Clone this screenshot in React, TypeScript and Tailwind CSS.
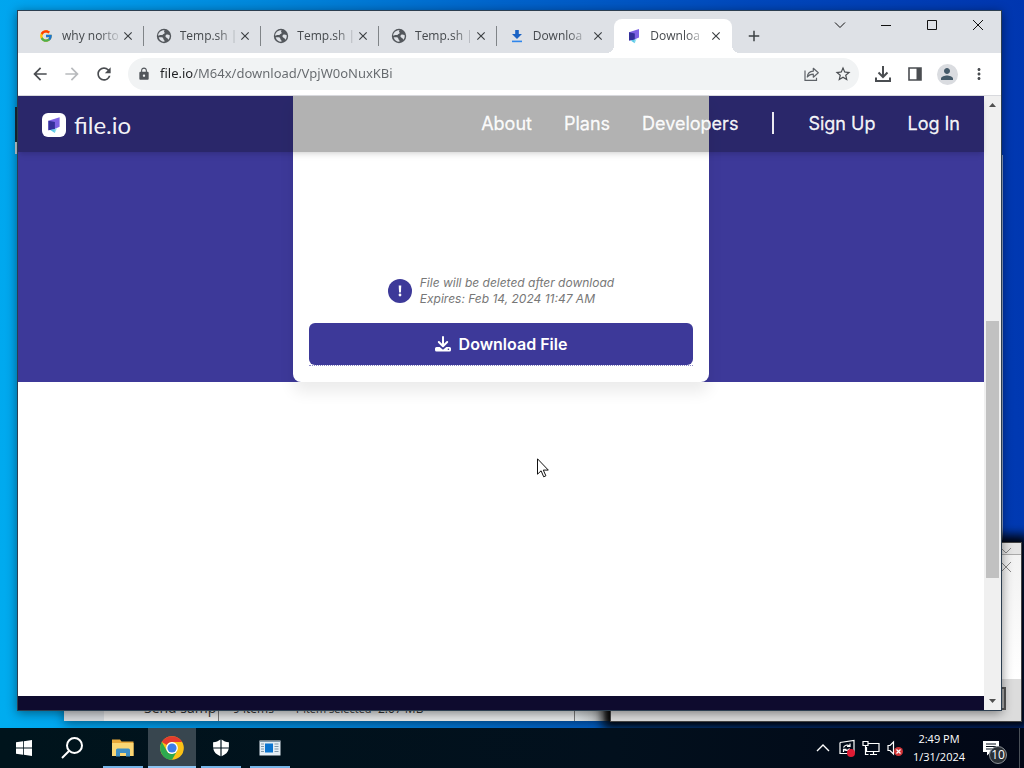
import type { ReactNode } from "react";
import { FcGoogle } from "react-icons/fc";
import {
  MdAdd,
  MdArrowBack,
  MdArrowForward,
  MdClose,
  MdLock,
  MdMoreVert,
  MdPerson,
  MdPublic,
  MdRefresh,
  MdStarBorder,
} from "react-icons/md";

function FileIoMark({ className }: { className: string }) {
  return (
    <svg viewBox="0 0 16 16" className={className} aria-hidden="true">
      <path d="M3 4.200 13 1v8.600L8.600 11.600 3 12.600z" fill="#7d62e4" />
      <path d="M3 4.200 8.800 5.400v6.400L3 12.600z" fill="#34309a" />
      <path d="M4.600 12.400 8.800 11.600v3.600z" fill="#5cc8e8" />
      <path d="M8.800 11.600 10.600 10.800 8.800 15.200z" fill="#8fe3ee" />
    </svg>
  );
}

function GlobeMark() {
  return (
    <svg viewBox="0 0 16 16" className="size-4" aria-hidden="true">
      <circle cx="8" cy="8" r="7.200" fill="#53575c" />
      <path
        d="M9 2.300c-1 .3-1.200 1.300-.6 1.900.8.700 0 1.500-.9 1.700-.8.200-.6 1-1.300 1.200H4.500c-.9 0-1.300.9-2.400.5C2.300 4.500 5 1.900 9 2.300zM2.700 9.200h3.100c1 0 1.500.8 1.500 1.600 0 1 1 .8 1.100 1.700l.1 1.300c-2.900.1-5.100-1.700-5.800-4.600zM10 6.900c1-.6 2.600-.3 3.700.4.200 1.700-.3 3.200-1.300 4.400-.6-.3-.5-1.200-1.300-1.600-1.400-.6-2.400-2.300-1.100-3.200z"
        fill="#dee1e6"
      />
    </svg>
  );
}

function SaveMark() {
  return (
    <svg viewBox="0 0 16 16" className="size-4" aria-hidden="true">
      <path d="M6.200 2h3.600v4h3.200L8 11 3 6h3.200z" fill="#1a62c4" />
      <path d="M3 12.600h10v1.600H3z" fill="#2f86ec" />
    </svg>
  );
}

function Tab({ icon, title, active, divided }: { icon: ReactNode; title: string; active?: boolean; divided?: boolean }) {
  return (
    <div
      className={
        active
          ? "relative flex h-[34px] min-w-0 flex-1 items-center rounded-t-lg bg-white pr-2 pl-3"
          : divided
            ? "relative flex h-[34px] min-w-0 flex-1 items-center pr-2 pl-3 after:absolute after:top-[7px] after:right-0 after:h-5 after:w-px after:bg-[#808488]"
            : "relative flex h-[34px] min-w-0 flex-1 items-center pr-2 pl-3"
      }
    >
      <button className="flex min-w-0 flex-1 items-center gap-2 text-left">
        <span className="flex w-4 shrink-0 justify-center">{icon}</span>
        <span className="flex-1 whitespace-nowrap [mask-image:linear-gradient(90deg,#000_65%,rgba(0,0,0,0.15))]">
          {title}
        </span>
      </button>
      <button aria-label={`Close ${title}`} className="ml-1 flex size-4 shrink-0 items-center justify-center text-[#3c4043]">
        <MdClose className="size-[14px]" />
      </button>
      {active && (
        <>
          <span className="absolute bottom-0 -left-2 size-2 bg-[radial-gradient(circle_at_0_0,transparent_8px,#fff_8px)]" />
          <span className="absolute -right-2 bottom-0 size-2 bg-[radial-gradient(circle_at_100%_0,transparent_8px,#fff_8px)]" />
        </>
      )}
    </div>
  );
}

function ToolButton({ label, children }: { label: string; children: ReactNode }) {
  return (
    <button aria-label={label} className="flex size-8 shrink-0 items-center justify-center text-[#4a4d51]">
      {children}
    </button>
  );
}

function CaptionButton({ label, path }: { label: string; path: string }) {
  return (
    <button aria-label={label} className="flex h-7 w-[46px] items-center justify-center">
      <svg viewBox="0 0 12 12" className="size-3" fill="none" stroke="#111" strokeWidth="1">
        <path d={path} />
      </svg>
    </button>
  );
}

function TabStrip() {
  return (
    <div className="flex h-[42px] shrink-0 bg-[#dee1e6] pl-2 text-[12px] text-[#45494d]">
      <div className="flex w-[706px] items-end">
        <Tab icon={<FcGoogle className="size-[14px]" />} title="why norto" divided />
        <Tab icon={<GlobeMark />} title="Temp.sh |" divided />
        <Tab icon={<GlobeMark />} title="Temp.sh |" divided />
        <Tab icon={<GlobeMark />} title="Temp.sh |" divided />
        <Tab icon={<SaveMark />} title="Downloa" />
        <Tab icon={<FileIoMark className="size-4" />} title="Downloa" active />
      </div>
      <button aria-label="New tab" className="mt-[11px] ml-2 flex size-7 items-center justify-center text-[#3c4043]">
        <MdAdd className="size-[18px]" />
      </button>
      <div className="ml-auto flex">
        <CaptionButton label="Search tabs" path="M1 3.500 6 8.500 11 3.500" />
        <CaptionButton label="Minimize" path="M1 6.500h10" />
        <CaptionButton label="Maximize" path="M1.500 1.500h9v9h-9z" />
        <CaptionButton label="Close" path="M1 1 11 11M11 1 1 11" />
      </div>
    </div>
  );
}

function Toolbar() {
  return (
    <div className="flex h-[43px] shrink-0 items-center border-b border-[#d9dade] bg-white px-[6px]">
      <ToolButton label="Back">
        <MdArrowBack className="size-5" />
      </ToolButton>
      <button aria-label="Forward" className="flex size-8 items-center justify-center text-[#b8babd]">
        <MdArrowForward className="size-5" />
      </button>
      <ToolButton label="Reload">
        <MdRefresh className="size-5" />
      </ToolButton>
      <div className="ml-2 flex h-8 min-w-0 flex-1 items-center rounded-full bg-[#f1f3f4] pl-[9px]">
        <MdLock className="size-[14px] shrink-0 text-[#53575c]" />
        <input
          aria-label="Address"
          defaultValue="file.io/M64x/download/VpjW0oNuxKBi"
          className="ml-[9px] min-w-0 flex-1 bg-[linear-gradient(90deg,#202124_33px,#64686c_33px)] bg-clip-text font-['Noto_Sans',sans-serif] text-[13px] text-transparent outline-none"
        />
        <ToolButton label="Share">
          <svg viewBox="0 0 18 18" className="size-[18px]" fill="none" stroke="#5f6368" strokeWidth="1.200">
            <path d="M3 5.500v9.800h11.500v-2.600" />
            <path d="M5.300 12C5.600 8.400 7.800 6.300 11.300 6.200V3.300L16.300 7.800 11.300 12.200V9.200C8.600 9.200 6.700 10.100 5.300 12z" strokeLinejoin="round" />
          </svg>
        </ToolButton>
        <ToolButton label="Bookmark">
          <MdStarBorder className="size-[18px]" />
        </ToolButton>
      </div>
      <div className="ml-2 flex">
        <ToolButton label="Downloads">
          <svg viewBox="0 0 18 18" className="size-[18px]" fill="none" stroke="#4a4d51" strokeWidth="2">
            <path d="M9 1v10.500M4.500 7.500 9 12l4.500-4.500M2 12.500V16h14v-3.500" />
          </svg>
        </ToolButton>
        <ToolButton label="Side panel">
          <svg viewBox="0 0 14 14" className="size-[14px]" fill="none">
            <path d="M1 1h12v12H1z" stroke="#4a4d51" strokeWidth="1.600" />
            <path d="M8.500 1H13v12H8.500z" fill="#4a4d51" />
          </svg>
        </ToolButton>
        <ToolButton label="Profile">
          <span className="flex size-[21px] items-center justify-center rounded-full bg-[#dadce0]">
            <MdPerson className="size-[18px] text-[#455a69]" />
          </span>
        </ToolButton>
        <ToolButton label="Menu">
          <MdMoreVert className="size-[18px]" />
        </ToolButton>
      </div>
    </div>
  );
}

function SiteNav() {
  return (
    <nav className="absolute inset-x-0 top-0 flex h-14 items-center bg-black/30 px-6 pb-[2px] font-['Inter',sans-serif] text-[18px] font-normal text-white/95 shadow-md">
      <a href="#home" className="mt-1 flex items-center gap-2">
        <span className="flex size-6 items-center justify-center rounded-md bg-white">
          <FileIoMark className="size-[18px]" />
        </span>
        <span className="font-['Lato',sans-serif] text-[24px] leading-6">file.io</span>
      </a>
      <div className="ml-auto flex items-center gap-8 [-webkit-text-stroke:0.3px_currentColor]">
        <a href="#about">About</a>
        <a href="#plans">Plans</a>
        <a href="#developers">Developers</a>
        <span className="mx-[2px] h-[22px] w-[2px] bg-white/90" />
        <a href="#signup">Sign Up</a>
        <a href="#login">Log In</a>
      </div>
    </nav>
  );
}

function DownloadCard() {
  return (
    <div className="flex w-[416px] flex-col justify-end rounded-b-lg bg-white p-4 font-['Inter',sans-serif] shadow-[0_10px_15px_rgba(0,0,0,0.08)]">
      <div className="mb-4 flex items-center justify-center gap-2">
        <span className="flex size-6 items-center justify-center rounded-full bg-[#3d3999]">
          <svg viewBox="0 0 12 12" className="size-3" fill="#fff" aria-hidden="true">
            <path d="M4.700.6h2.600L6.900 7.500H5.100z" />
            <circle cx="6" cy="10" r="1.400" />
          </svg>
        </span>
        <p className="text-[12px] leading-4 text-[#777] italic">
          File will be deleted after download
          <br />
          Expires: Feb 14, 2024 11:47 AM
        </p>
      </div>
      <div className="border-b border-dotted border-[#8f8cc8]">
        <button className="flex h-[42px] w-full items-center justify-center gap-2 rounded-md bg-[#3d3999] text-[16px] font-semibold text-white">
          <svg viewBox="0 0 16 16" className="size-4" aria-hidden="true">
            <path d="M8 1v8.500M3.800 6 8 10.200 12.200 6" fill="none" stroke="#fff" strokeWidth="2" strokeLinecap="round" strokeLinejoin="round" />
            <path d="M1.500 11h3.200L8 13.700 11.300 11h3.200a1.500 1.500 0 0 1 1.500 1.500V14a1.500 1.500 0 0 1-1.500 1.500h-13A1.500 1.500 0 0 1 0 14v-1.500A1.500 1.500 0 0 1 1.500 11z" fill="#fff" />
            <circle cx="13.400" cy="13.300" r=".8" fill="#3d3999" />
          </svg>
          Download File
        </button>
      </div>
    </div>
  );
}

function Browser() {
  return (
    <section className="absolute top-[10px] right-[22px] bottom-[57px] left-[17px] flex flex-col border border-[#2c3e50] bg-white shadow-[0_2px_10px_rgba(0,0,0,0.45)]">
      <TabStrip />
      <Toolbar />
      <div className="flex min-h-0 flex-1">
        <main className="relative flex min-w-0 flex-1 flex-col bg-white">
          <div className="flex h-[286px] shrink-0 justify-center bg-[#3d3999]">
            <DownloadCard />
          </div>
          <div className="flex-1" />
          <footer className="h-[14px] bg-[#0e0b2e]" />
          <SiteNav />
        </main>
        <div className="flex w-[17px] flex-col items-center bg-[#f0f0f0]">
          <svg viewBox="0 0 17 17" className="size-[17px] shrink-0" fill="#505050">
            <path d="M5 11h7L8.500 7z" />
          </svg>
          <div className="flex w-full flex-1 flex-col items-center">
            <div className="flex-[208]" />
            <div className="w-[13px] flex-[257] bg-[#c1c1c1]" />
            <div className="flex-[115]" />
          </div>
          <svg viewBox="0 0 17 17" className="size-[17px] shrink-0" fill="#505050">
            <path d="M5 6h7L8.500 10z" />
          </svg>
        </div>
      </div>
    </section>
  );
}

function BackgroundWindows() {
  return (
    <>
      <div className="absolute top-[107px] left-[15px] flex w-[3px] flex-col">
        <div className="h-[35px] bg-[#1c2b3a]" />
        <div className="h-3 bg-[#cfd8e0]" />
      </div>
      <div className="absolute top-[155px] right-[21px] h-[385px] w-[2px] bg-[#8fa3c8]" />
      <section className="absolute bottom-[47px] left-[64px] flex h-[200px] w-[546px] items-end bg-[#d9dadb] shadow-[0_3px_10px_rgba(0,0,0,0.4)]">
        <div className="flex h-6 w-[155px] items-center border-r border-[#777] bg-[linear-gradient(90deg,#d4d8dc_40px,#e9e9e9_40px)] pb-[2px] pl-20 text-[14px] leading-4 text-[#333]">
          Send samp
        </div>
        <div className="flex h-6 flex-1 items-center border-r border-[#777] bg-[#e4e6e7] pl-[14px] text-[12px] leading-4 text-[#333]">
          <span className="w-[61px]">9 items</span>
          <span className="w-[84px] text-[11px] whitespace-nowrap">1 item selected</span>
          <span>2.07 MB</span>
        </div>
        <div className="h-6 w-[35px] bg-[linear-gradient(90deg,#dfe4e6,#b7babb_80%,#444)]" />
      </section>
      <section className="absolute right-[2px] bottom-[46px] flex h-[180px] w-[412px] flex-col border border-[#444] bg-white shadow-[0_0_10px_7px_rgba(0,0,0,0.95)]">
        <div className="flex h-3 justify-end border-b border-[#aaa] bg-[#e4e4e4] pr-[9px]">
          <svg viewBox="0 0 12 12" className="size-3" fill="none" stroke="#888">
            <path d="M1 5 6 10 11 5" />
          </svg>
        </div>
        <div className="flex flex-1 justify-end bg-[linear-gradient(#f2f2f2,#fff)] pt-[6px] pr-[9px]">
          <svg viewBox="0 0 12 12" className="size-3" fill="none" stroke="#888">
            <path d="M1 1 11 11M11 1 1 11" />
          </svg>
        </div>
        <div className="flex h-[42px] justify-end bg-[#dcdcdc] pt-2 pr-[15px]">
          <div className="h-[23px] w-8 border-2 border-[#555] bg-[#aaa]" />
        </div>
      </section>
    </>
  );
}

function TaskButton({ label, active, running, children }: { label: string; active?: boolean; running?: boolean; children: ReactNode }) {
  return (
    <button
      aria-label={label}
      className={
        active
          ? "relative flex h-10 w-12 items-center justify-center bg-[#38464f]"
          : "relative flex h-10 w-12 items-center justify-center"
      }
    >
      {children}
      {running && (
        <span className={active ? "absolute inset-x-0 bottom-0 h-[2px] bg-[#8cc4f2]" : "absolute inset-x-1 bottom-0 h-[2px] bg-[#76b5e8]"} />
      )}
    </button>
  );
}

function Taskbar() {
  return (
    <footer className="absolute inset-x-0 bottom-0 flex h-10 items-center bg-[linear-gradient(90deg,#00141c,#02101d_60%,#020716)] text-white">
      <TaskButton label="Start">
        <svg viewBox="0 0 16 16" className="size-4" fill="#fff">
          <path d="M0 2.300 7 1.300v6.300H0zM7.800 1.200 16 0v7.600H7.800zM0 8.400h7v6.300l-7-1zM7.800 8.400H16V16l-8.200-1.200z" />
        </svg>
      </TaskButton>
      <TaskButton label="Search">
        <svg viewBox="0 0 22 22" className="size-[22px]" fill="none" stroke="#fff" strokeWidth="2">
          <circle cx="13.500" cy="8.500" r="7.500" />
          <path d="M8 14 1 21" />
        </svg>
      </TaskButton>
      <div className="ml-[3px] flex gap-px">
        <TaskButton label="File Explorer" running>
          <svg viewBox="0 0 22 20" className="h-5 w-[22px]">
            <path d="M0 1.500h8l1.500 2H21.500V18H0z" fill="#e8a93a" />
            <path d="M0 5h21.500v13H0z" fill="#fbd774" />
            <path d="M4 18v-6a1.500 1.500 0 0 1 1.500-1.500h11A1.500 1.500 0 0 1 18 12v6.500h-4V15H8v3.500H4z" fill="#3f8fc4" />
          </svg>
        </TaskButton>
        <TaskButton label="Chrome" running active>
          <svg viewBox="0 0 24 24" className="size-6">
            <circle cx="12" cy="12" r="11.800" fill="#fbc116" />
            <path d="M1.780 6.100A11.800 11.800 0 0 1 22.220 6.100H12A5.900 5.900 0 0 0 6.890 9.050z" fill="#e33b2e" />
            <path d="M1.780 6.100 6.890 14.950A5.900 5.900 0 0 0 12 17.900l5.110-2.950L12 23.800A11.800 11.800 0 0 1 1.780 6.100z" fill="#2da94f" />
            <circle cx="12" cy="12" r="5.900" fill="#fff" />
            <circle cx="12" cy="12" r="4.600" fill="#3b7de9" />
          </svg>
        </TaskButton>
        <TaskButton label="Security" running>
          <svg viewBox="0 0 18 18" className="size-[18px]" fill="#fff">
            <path d="M8.400.6V8.400H1.100V3.300C4 3.200 6.400 2.300 8.400.6zM9.600.6c2 1.700 4.400 2.600 7.300 2.700v5.100H9.600zM1.200 9.600h7.200v7.600C4.600 15.700 1.800 13.300 1.200 9.600zM9.600 9.600h7.200c-.6 3.700-3.400 6.100-7.200 7.600z" />
          </svg>
        </TaskButton>
        <TaskButton label="Viewer" running>
          <svg viewBox="0 0 22 16" className="h-4 w-[22px]">
            <path d="M.5.500h21v15H.5z" fill="#e4edf4" />
            <path d="M6 3.500h8v9H6z" fill="#0b74cf" />
            <path d="M2 4h3M2 6.500h3M2 9h3M2 11.500h3M15.500 4h4M15.500 6.500h4M15.500 9h4M15.500 11.500h4M1 1.500h20" stroke="#7f98ab" />
          </svg>
        </TaskButton>
      </div>
      <div className="ml-auto flex h-10 items-center pr-1">
        <button aria-label="Hidden icons" className="flex w-6 justify-center">
          <svg viewBox="0 0 14 8" className="h-2 w-[14px]" fill="none" stroke="#fff" strokeWidth="1.400">
            <path d="M1 7 7 1l6 6" />
          </svg>
        </button>
        <button aria-label="Sync status" className="flex w-6 justify-center">
          <svg viewBox="0 0 18 18" className="size-[18px]" fill="none" stroke="#fff" strokeWidth="1.200">
            <path d="M2 3.500 16 1.500v12.500M2 3.500v11h8M5.500 8.500C6.500 6 9.500 5.500 11.500 7M12 4.500V7.500H9M11.500 9.500c-1 2-3.500 2.500-5.500 1.200M5.500 13v-2.700h3" />
            <circle cx="13" cy="14" r="4" fill="#e01b34" stroke="none" />
          </svg>
        </button>
        <button aria-label="Network" className="flex w-6 justify-center">
          <svg viewBox="0 0 18 16" className="h-4 w-[18px]" fill="none" stroke="#fff" strokeWidth="1.200">
            <path d="M6 3.500h11v8H4.500V7M8 14.500h7M11.500 11.500v3M1 1.500h5v4H1zM3.500 5.500v9h3" />
          </svg>
        </button>
        <button aria-label="Volume muted" className="flex w-6 justify-center">
          <svg viewBox="0 0 18 18" className="size-[18px]" fill="none" stroke="#fff" strokeWidth="1.200">
            <path d="M2 6.500h2L7.500 3v12L4 11.500H2z" />
            <circle cx="12.500" cy="12.500" r="4.500" fill="#d13438" stroke="none" />
            <path d="M10.500 10.500l4 4M14.500 10.500l-4 4" />
          </svg>
        </button>
        <time className="w-16 text-center text-[11px] leading-[18px] whitespace-nowrap">
          2:49 PM
          <br />
          1/31/2024
        </time>
        <button aria-label="Notifications" className="relative ml-3 flex size-6 items-center">
          <svg viewBox="0 0 16 16" className="size-4" fill="#fff">
            <path d="M0 1h16v11H8l-4 3.500V12H0z" />
            <path d="M3 4h10M3 6.500h10M3 9h7" stroke="#06101c" />
          </svg>
          <span className="absolute top-[10px] left-[6px] flex size-[18px] items-center justify-center rounded-full border border-[#8a8f94] bg-[#2a3036] text-[12px] leading-none">
            10
          </span>
        </button>
        <span className="ml-3 h-10 w-px bg-[#4a5058]" />
      </div>
    </footer>
  );
}

export default function App() {
  return (
    <div className="relative h-screen w-full overflow-hidden bg-[linear-gradient(85deg,#00adef_0%,#009fee_12%,#0088dc_30%,#0064cc_52%,#0048bc_75%,#0036b0_100%)] font-['Open_Sans','Noto_Sans',sans-serif]">
      <BackgroundWindows />
      <Browser />
      <Taskbar />
      <svg viewBox="0 0 12 20" className="absolute top-[458px] left-[537px] h-5 w-3" aria-hidden="true">
        <path d="M.5.800v15.400l3.600-3.400 2.600 6 2.200-1-2.600-5.700h5z" fill="#fff" stroke="#111" strokeWidth="1" />
      </svg>
    </div>
  );
}
